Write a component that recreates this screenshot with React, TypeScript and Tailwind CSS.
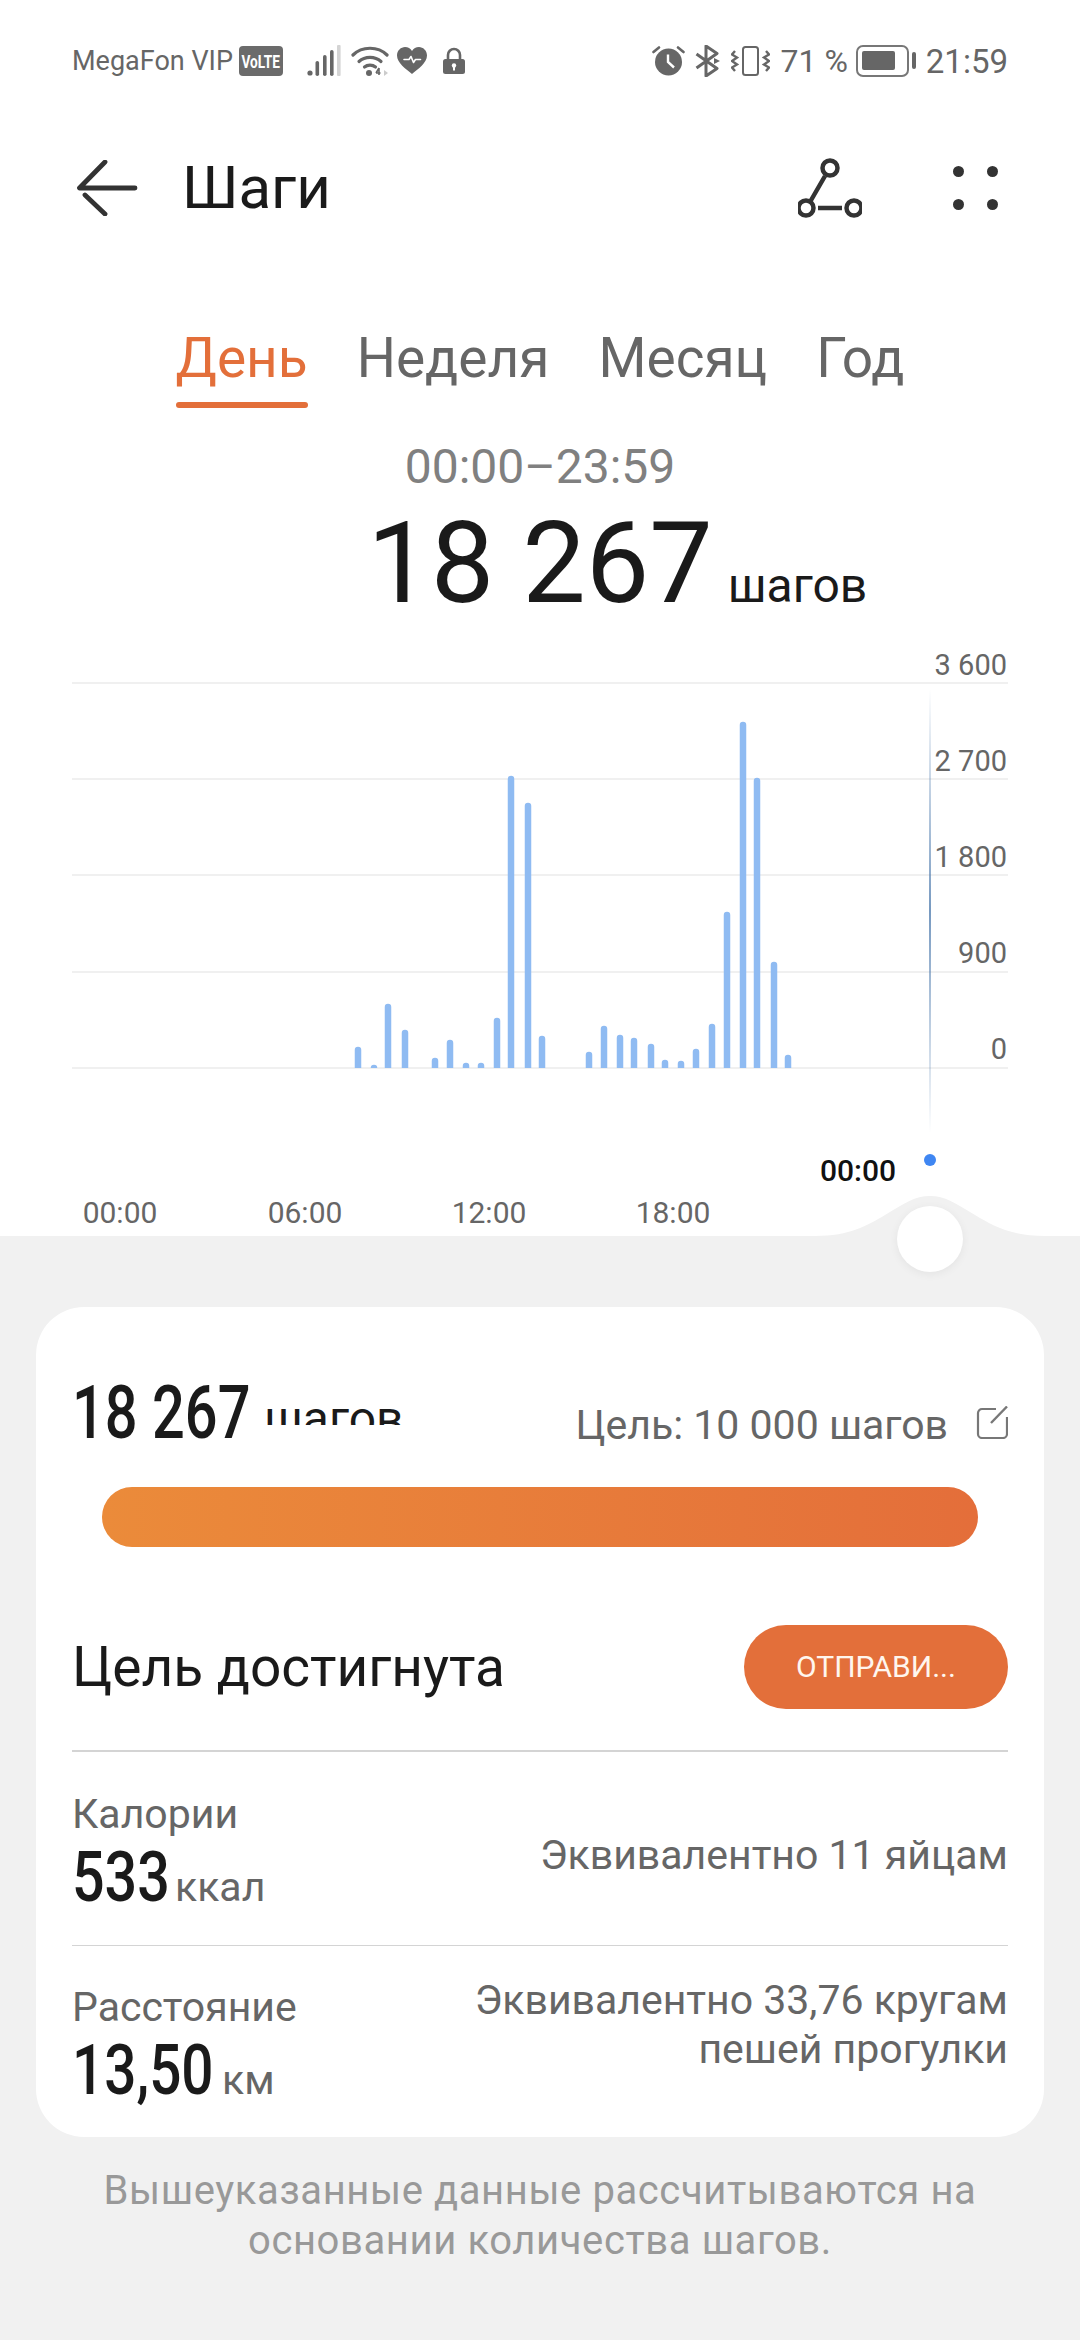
import React from 'react'

// hour buckets of the day chart: [centre x, top y], baseline sits at y = 1067
const bars: [number, number][] = [
  [358, 1046], [374, 1064], [388, 1003], [405, 1029], [435, 1057], [450, 1039],
  [466, 1062], [481, 1062], [497, 1017], [511, 775], [528, 802], [542, 1035],
  [589, 1051], [604, 1025], [620, 1034], [634, 1037], [651, 1043], [665, 1059],
  [681, 1060], [696, 1048], [712, 1023], [727, 911], [743, 721], [757, 777],
  [774, 961], [788, 1054],
]

const gridLines = [682, 778, 874, 971, 1067]

const yLabels = [
  { text: '3 600', y: 674 },
  { text: '2 700', y: 770 },
  { text: '1 800', y: 866 },
  { text: '900', y: 962 },
  { text: '0', y: 1058 },
]

const xLabels = [
  { text: '00:00', x: 120 },
  { text: '06:00', x: 305 },
  { text: '12:00', x: 489 },
  { text: '18:00', x: 673 },
]

function SignalIcon() {
  return (
    <svg width="36" height="32" viewBox="0 0 36 32" className="ml-[23px]">
      <circle cx="4" cy="28" r="2.6" fill="#666" />
      <rect x="9.5" y="16" width="3.6" height="15" rx="1.8" fill="#666" />
      <rect x="17" y="10" width="3.6" height="21" rx="1.8" fill="#666" />
      <rect x="24" y="5" width="3.6" height="26" rx="1.8" fill="#666" />
      <rect x="31" y="0" width="3.6" height="31" rx="1" fill="#d4d4d4" />
    </svg>
  )
}

function WifiIcon() {
  return (
    <svg width="38" height="32" viewBox="0 0 38 32" fill="none" className="ml-[9px]">
      <path d="M2 10C11 1 27 1 36 10" stroke="#666" strokeWidth="3.2" strokeLinecap="round" />
      <path d="M8 16.5C14 11 24 11 30 16.5" stroke="#666" strokeWidth="3.2" strokeLinecap="round" />
      <path d="M13.5 22C16.5 19.5 21.5 19.5 24.5 22" stroke="#666" strokeWidth="3.2" strokeLinecap="round" />
      <circle cx="18" cy="28" r="3" fill="#666" />
      <path d="M28 23v7M25 28h4.5M28 23l-3 5" stroke="#666" strokeWidth="1.6" />
      <path d="M33 25l4 3-4 3z" fill="#ccc" />
    </svg>
  )
}

function HeartIcon() {
  return (
    <svg width="30" height="28" viewBox="0 0 30 28" className="ml-[8px]">
      <path d="M15 27C9 22 0 16 0 8.5 0 3.5 4 0 8 0c3 0 5.500 1.500 7 4 1.500-2.500 4-4 7-4 4 0 8 3.500 8 8.500C30 16 21 22 15 27z" fill="#666" />
      <path d="M7 12.500h5l2-3 2.500 6 2-3h5" fill="none" stroke="#fff" strokeWidth="1.6" strokeLinecap="round" strokeLinejoin="round" />
    </svg>
  )
}

function LockIcon() {
  return (
    <svg width="22" height="28" viewBox="0 0 22 28" className="ml-[16px]">
      <path d="M5 13V8a6 6 0 0 1 12 0v5" fill="none" stroke="#666" strokeWidth="2.6" />
      <rect x="0" y="12" width="22" height="15" rx="2.500" fill="#666" />
      <circle cx="11" cy="18.500" r="2.200" fill="#fff" />
      <rect x="10" y="19" width="2" height="4.500" fill="#fff" />
    </svg>
  )
}

function AlarmIcon() {
  return (
    <svg width="33" height="30" viewBox="0 0 33 30" fill="none">
      <circle cx="16.500" cy="16" r="13.500" fill="#666" />
      <path d="M16 8.500V16l6 5.500" stroke="#fff" strokeWidth="2.400" />
      <path d="M1.500 6L7 1.500M31.500 6L26 1.500" stroke="#666" strokeWidth="2.600" strokeLinecap="round" />
    </svg>
  )
}

function BluetoothIcon() {
  return (
    <svg width="26" height="32" viewBox="0 0 26 32" fill="none" className="ml-[10px]">
      <path d="M1.500 9L22 23.500 11 31V1l11 7.500L1.500 23" stroke="#666" strokeWidth="3" strokeLinejoin="round" />
      <path d="M19 13l6 3-6 3z" fill="#666" />
    </svg>
  )
}

function VibrateIcon() {
  return (
    <svg width="39" height="30" viewBox="0 0 39 30" fill="none" className="ml-[10px]">
      <rect x="12" y="1" width="15" height="28" rx="2.500" stroke="#666" strokeWidth="2" />
      <path d="M4 5L1 8.500l5 3-5 3.500 5 3.500-5 3L4 25" stroke="#666" strokeWidth="2.400" />
      <path d="M35 5l3 3.500-5 3 5 3.500-5 3.500 5 3-3 3.500" stroke="#666" strokeWidth="2.400" />
    </svg>
  )
}

function BatteryIcon() {
  return (
    <svg width="60" height="32" viewBox="0 0 60 32" fill="none" className="ml-[8px]">
      <rect x="1" y="1" width="51" height="30" rx="6" stroke="#777" strokeWidth="2" />
      <rect x="6" y="6" width="33" height="19" rx="2" fill="#666" />
      <rect x="56" y="7" width="4" height="17" rx="2" fill="#666" />
    </svg>
  )
}

function StatusBar() {
  return (
    <div className="flex h-[122px] items-center justify-between px-[72px] text-[#666]">
      <div className="flex items-center">
        <span className="text-[27px] leading-none">MegaFon VIP</span>
        <span className="ml-[6px] flex h-[30px] w-[44px] items-center justify-center overflow-hidden rounded-[4px] bg-[#6b6b6b]">
          <span className="scale-x-[0.72] text-[19px] leading-none font-bold text-white">VoLTE</span>
        </span>
        <SignalIcon />
        <WifiIcon />
        <HeartIcon />
        <LockIcon />
      </div>
      <div className="flex items-center">
        <AlarmIcon />
        <BluetoothIcon />
        <VibrateIcon />
        <span className="ml-[10px] text-[32px] leading-none">71 %</span>
        <BatteryIcon />
        <span className="ml-[10px] text-[33px] leading-none">21:59</span>
      </div>
    </div>
  )
}

function Header() {
  return (
    <div className="flex h-[131px] items-center pr-[82px] pl-[72px] text-[#1a1a1a]">
      <svg width="68" height="56" viewBox="0 0 68 56" fill="none" className="shrink-0">
        <path d="M33 2L7.500 28H63M13 35l20 19" stroke="#333" strokeWidth="4.800" strokeLinecap="round" strokeLinejoin="round" />
      </svg>
      <span className="ml-[42px] flex-1 text-[60px] leading-none">Шаги</span>
      <svg width="64" height="64" viewBox="0 0 64 64" fill="none" className="mr-[91px]">
        <path d="M27 20L12 46M20 52h24" stroke="#333" strokeWidth="4.500" />
        <circle cx="32" cy="12" r="7.500" stroke="#333" strokeWidth="4.500" />
        <circle cx="8" cy="52" r="7.500" stroke="#333" strokeWidth="4.500" />
        <circle cx="56" cy="52" r="7.500" stroke="#333" strokeWidth="4.500" />
      </svg>
      <div className="grid grid-cols-2 gap-x-[23px] gap-y-[22px]">
        <span className="size-[11px] rounded-full bg-[#333]" />
        <span className="size-[11px] rounded-full bg-[#333]" />
        <span className="size-[11px] rounded-full bg-[#333]" />
        <span className="size-[11px] rounded-full bg-[#333]" />
      </div>
    </div>
  )
}

function Tabs() {
  return (
    <div className="mt-[75px] flex justify-center gap-[49px] text-[55px] leading-[60px] text-[#666]">
      <div className="flex flex-col">
        <span className="text-[#e36f3a]">День</span>
        <span className="mt-[14px] h-[6px] rounded-full bg-[#e36f3a]" />
      </div>
      <span>Неделя</span>
      <span>Месяц</span>
      <span>Год</span>
    </div>
  )
}

function Totals() {
  return (
    <div className="mt-[33px] flex flex-col items-center pb-[21px]">
      <span className="text-[48px] leading-[52px] text-[#808080]">00:00–23:59</span>
      <div className="mt-[15px] grid w-full grid-cols-[1fr_auto_1fr] items-baseline text-[#1a1a1a]">
        <span />
        <span className="text-[113px] leading-[112px]">18 267</span>
        <span className="pl-[15px] text-[48px] leading-none">шагов</span>
      </div>
    </div>
  )
}

function DayChart() {
  return (
    <svg width="1080" height="595" viewBox="0 640 1080 595" className="block shrink-0 overflow-visible">
      <defs>
        <linearGradient id="cursorLine" x1="0" y1="0" x2="0" y2="1">
          <stop offset="0" stopColor="#4a78ac" stopOpacity="0" />
          <stop offset="0.5" stopColor="#4a78ac" />
          <stop offset="1" stopColor="#4a78ac" stopOpacity="0" />
        </linearGradient>
      </defs>
      {gridLines.map((y) => (
        <rect key={y} x="72" y={y - 0.75} width="936" height="1.500" fill="#ececec" />
      ))}
      {bars.map(([x, top]) => (
        <path key={x} d={`M${x - 3.25} 1067V${top + 3}a3.25 3.25 0 0 1 6.500 0V1067Z`} fill="#8fbbf2" />
      ))}
      <rect x="929.25" y="688" width="1.500" height="444" fill="url(#cursorLine)" />
      {yLabels.map((l) => (
        <text key={l.text} x="1007" y={l.y} textAnchor="end" fontSize="29" fill="#666">
          {l.text}
        </text>
      ))}
      {xLabels.map((l) => (
        <text key={l.text} x={l.x} y="1222" textAnchor="middle" fontSize="30" fill="#666">
          {l.text}
        </text>
      ))}
      <text x="858" y="1180" textAnchor="middle" fontSize="30" fontWeight="500" fill="#111">
        00:00
      </text>
      <circle cx="930" cy="1159" r="6" fill="#3f86f2" />
      {/* bump the slider knob sits in */}
      <path
        d="M815 1235C850 1235 868 1224 885 1214C905 1202 915 1195 930 1195C945 1195 955 1202 975 1214C992 1224 1010 1235 1045 1235Z"
        fill="#f1f1f1"
      />
    </svg>
  )
}

function EditIcon() {
  return (
    <svg width="32" height="33" viewBox="0 0 32 33" fill="none" className="mt-[6px] ml-[28px]">
      <path d="M20 3H6a4 4 0 0 0-4 4v21a4 4 0 0 0 4 4h21a4 4 0 0 0 4-4V11" stroke="#777" strokeWidth="2.200" />
      <path d="M15 17L31 0.500" stroke="#777" strokeWidth="2.400" />
    </svg>
  )
}

function SummaryCard() {
  return (
    <div className="flex h-[830px] flex-col rounded-[48px] bg-white px-[36px] pt-[68px]">
      <div className="flex h-[75px] items-start">
        <span className="w-[192px] origin-left scale-x-[0.77] text-[75px] leading-[75px] font-medium whitespace-nowrap text-[#1a1a1a]">
          18 267
        </span>
        <span className="mt-[16px] h-[34px] flex-1 overflow-hidden text-[48px] leading-[56px] text-[#1a1a1a]">шагов</span>
        <div className="mt-[25px] flex items-start text-[#666]">
          <span className="text-[41px] leading-[50px]">Цель: 10 000 шагов</span>
          <EditIcon />
        </div>
      </div>

      <div className="mx-[30px] mt-[37px] h-[60px] rounded-full bg-gradient-to-r from-[#eb8b3a] to-[#e46e3a]" />

      <div className="mt-[78px] flex items-center justify-between">
        <span className="text-[55px] leading-none text-[#1a1a1a]">Цель достигнута</span>
        <span className="flex h-[84px] w-[264px] items-center justify-center rounded-full bg-[#e36f3a] text-[30px] leading-none text-[#fff6ee]">
          ОТПРАВИ...
        </span>
      </div>

      <div className="mt-[41px] h-[1.500px] bg-[#d4d4d4]" />

      <div className="mt-[38px] flex items-start justify-between">
        <div className="flex flex-col">
          <span className="text-[41px] leading-[48px] text-[#666]">Калории</span>
          <div className="mt-[4px] flex items-baseline">
            <span className="w-[103px] origin-left scale-x-[0.82] text-[70px] leading-[70px] font-medium text-[#1a1a1a]">533</span>
            <span className="text-[41px] leading-none text-[#666]">ккал</span>
          </div>
        </div>
        <span className="mt-[41px] text-[41px] leading-[49px] text-[#666]">Эквивалентно 11 яйцам</span>
      </div>

      <div className="mt-[33px] h-[1.500px] bg-[#d4d4d4]" />

      <div className="mt-[37px] flex items-start justify-between">
        <div className="flex flex-col">
          <span className="text-[41px] leading-[48px] text-[#666]">Расстояние</span>
          <div className="mt-[4px] flex items-baseline">
            <span className="w-[150px] origin-left scale-x-[0.81] text-[70px] leading-[70px] font-medium text-[#1a1a1a]">13,50</span>
            <span className="text-[41px] leading-none text-[#666]">км</span>
          </div>
        </div>
        <span className="-mt-[7px] text-right text-[41px] leading-[49px] text-[#666]">
          Эквивалентно 33,76 кругам
          <br />
          пешей прогулки
        </span>
      </div>
    </div>
  )
}

export default function App() {
  return (
    <div className="flex h-[2340px] w-[1080px] flex-col overflow-hidden bg-white font-['Roboto',sans-serif]">
      <StatusBar />
      <Header />
      <Tabs />
      <Totals />
      <DayChart />
      <div className="relative flex-1 bg-[#f1f1f1] px-[36px] pt-[71px]">
        {/* slider knob */}
        <div className="absolute top-[-30px] left-[897px] size-[66px] rounded-full bg-white shadow-[0_2px_10px_rgba(0,0,0,0.06)]" />
        <SummaryCard />
        <p className="mt-[29px] text-center text-[40px] leading-[50px] tracking-[0.6px] text-[#999]">
          Вышеуказанные данные рассчитываются на
          <br />
          основании количества шагов.
        </p>
      </div>
    </div>
  )
}
